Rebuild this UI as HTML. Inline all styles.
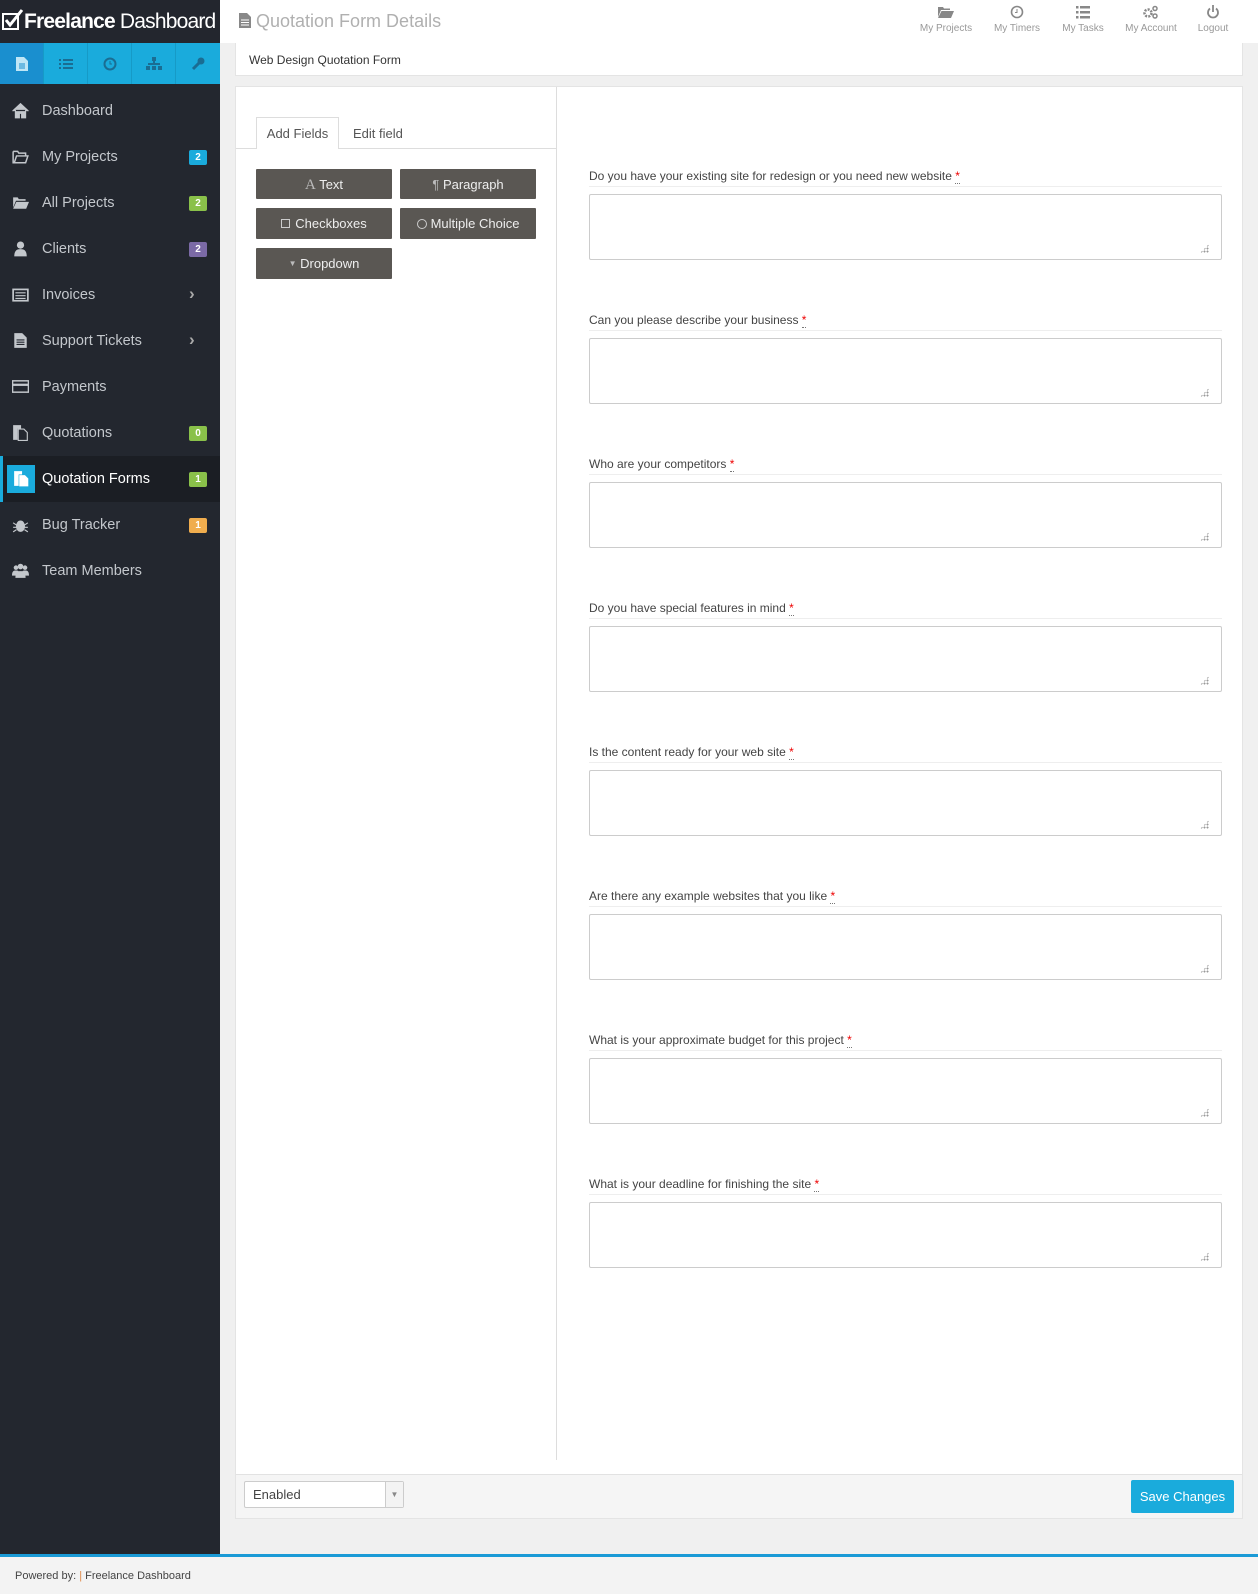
<!DOCTYPE html>
<html><head><meta charset="utf-8"><style>
*{margin:0;padding:0;box-sizing:border-box}
body{width:1258px;height:1594px;position:relative;background:#f0f0f0;font-family:"Liberation Sans",sans-serif;overflow:hidden;color:#555}
.abs{position:absolute}
#side{left:0;top:0;width:220px;height:1554px;background:#23272f}
#logo{left:0;top:0;width:220px;height:43px;background:#23262e;color:#fff;font-size:21px;line-height:43px;padding-left:2px;white-space:nowrap;overflow:hidden;letter-spacing:-0.8px}
#iconbar{left:0;top:43px;width:220px;height:41px;background:#1aabdc;display:flex}
#iconbar div{width:44px;height:41px;border-right:1px solid #169ac7;display:flex;align-items:center;justify-content:center}
.nav{left:0;width:220px;height:46px;color:#c3c7cc;font-size:14.5px;line-height:46px;padding-left:42px}
.nav .ic{position:absolute;left:12px;top:14px;width:17px;height:17px}
.badge{position:absolute;left:189px;top:16px;width:18px;height:15px;border-radius:2px;color:#fff;font-size:10px;font-weight:bold;line-height:15px;text-align:center}
.chev{position:absolute;left:189px;top:-1px;color:#aaa;font-size:17px;font-weight:bold}
#top{left:220px;top:0;width:1038px;height:43px;background:#fff}
.ti{top:5px;width:70px;text-align:center;color:#999;font-size:10px}
.ti svg{display:block;margin:0 auto 4px}
.panel{background:#fff;border:1px solid #e4e4e4}
.btn{position:absolute;width:136px;height:30px;background:#5a5753;color:#eee;font-size:13px;line-height:31px;text-align:center;border-radius:1px}
.lab{position:absolute;left:589px;width:633px;font-size:12px;color:#444;height:18px;border-bottom:1px solid #eee;line-height:14px}
.lab b{color:#e00;font-weight:normal;border-bottom:1px dotted #777}
.ta{position:absolute;left:589px;width:633px;height:66px;border:1px solid #ccc;border-radius:2px;background:#fff}
.ta:after{content:"";position:absolute;right:12px;bottom:6px;width:9px;height:9px;background:radial-gradient(circle,#999 0.9px,transparent 1.1px) 0 0/3px 3px;clip-path:polygon(100% 0,100% 100%,0 100%)}
</style></head><body>
<div id="side" class="abs"></div>
<div id="logo" class="abs"><svg width="22" height="22" style="vertical-align:-3px"><rect x="1" y="5" width="15" height="15" fill="none" stroke="#fff" stroke-width="2"/><path d="M4 11l4 5 12-15" fill="none" stroke="#fff" stroke-width="3"/></svg><b>Freelance</b> <span>Dashboard</span></div>
<div id="iconbar" class="abs">
<div style="background:#1a8fcf"><svg width="12" height="14"><path d="M0 0h8l4 4v10H0z" fill="#bfe6f6"/><path d="M3 7h6M3 9h6M3 11h6" stroke="#1a8fcf"/></svg></div>
<div><svg width="14" height="12" fill="#1a6d93"><rect x="0" y="1" width="2" height="2"/><rect x="4" y="1" width="10" height="2"/><rect x="0" y="5" width="2" height="2"/><rect x="4" y="5" width="10" height="2"/><rect x="0" y="9" width="2" height="2"/><rect x="4" y="9" width="10" height="2"/></svg></div>
<div><svg width="14" height="14"><circle cx="7" cy="7" r="5.5" fill="none" stroke="#1a6d93" stroke-width="2"/><path d="M7 4v3h2" stroke="#1a6d93" fill="none"/></svg></div>
<div><svg width="16" height="14" fill="#1a6d93"><rect x="6" y="0" width="4" height="4"/><rect x="7" y="4" width="2" height="3"/><rect x="2" y="6" width="12" height="2"/><rect x="0" y="9" width="4" height="4"/><rect x="6" y="9" width="4" height="4"/><rect x="12" y="9" width="4" height="4"/></svg></div>
<div style="border:none"><svg width="14" height="14"><path d="M2 12L8 6" stroke="#1a6d93" stroke-width="3"/><circle cx="10" cy="4" r="3.5" fill="#1a6d93"/></svg></div>
</div>

<div class="abs nav" style="top:88px"><svg class="ic" viewBox="0 0 15 15"><path d="M0.5 8L7.5 1.5 14.5 8M3 7v7h3.5v-4h2v4H12V7" fill="#c3c7cc" stroke="#c3c7cc"/></svg>Dashboard</div>
<div class="abs nav" style="top:134px"><svg class="ic" viewBox="0 0 15 15"><path d="M1 3h4l1 1.5h6V7M1 3v10h11l2-6H4l-2 6" fill="none" stroke="#c3c7cc" stroke-width="1.3"/></svg>My Projects<span class="badge" style="background:#1aabdc">2</span></div>
<div class="abs nav" style="top:180px"><svg class="ic" viewBox="0 0 15 15"><path d="M1 3h4l1 1.5h6V6H3.5L1 12z M3.8 7H15l-2.5 6H1z" fill="#c3c7cc"/></svg>All Projects<span class="badge" style="background:#8ac14a">2</span></div>
<div class="abs nav" style="top:226px"><svg class="ic" viewBox="0 0 15 15"><circle cx="7.5" cy="4.5" r="3.2" fill="#c3c7cc"/><path d="M2 14.5c0-5 2-6.5 5.5-6.5s5.5 1.5 5.5 6.5z" fill="#c3c7cc"/></svg>Clients<span class="badge" style="background:#7b6aa6">2</span></div>
<div class="abs nav" style="top:272px"><svg class="ic" viewBox="0 0 15 15"><rect x="1" y="3" width="13" height="10" fill="none" stroke="#c3c7cc" stroke-width="1.5"/><path d="M3 6h9M3 8.5h9M3 11h9" stroke="#c3c7cc"/></svg>Invoices<span class="chev">›</span></div>
<div class="abs nav" style="top:318px"><svg class="ic" viewBox="0 0 15 15"><path d="M2 1h7l4 4v9H2z" fill="#c3c7cc"/><path d="M4 7h7M4 9h7M4 11h7" stroke="#23272f"/></svg>Support Tickets<span class="chev">›</span></div>
<div class="abs nav" style="top:364px"><svg class="ic" viewBox="0 0 15 15"><rect x="0.5" y="2.5" width="14" height="10" fill="none" stroke="#c3c7cc" stroke-width="1.3"/><rect x="0.5" y="5" width="14" height="2" fill="#c3c7cc"/></svg>Payments</div>
<div class="abs nav" style="top:410px"><svg class="ic" viewBox="0 0 15 15"><path d="M1 1h7v3H5v10H1z" fill="#c3c7cc"/><path d="M5.5 4.5h5l3 3v7h-8z" fill="none" stroke="#c3c7cc"/></svg>Quotations<span class="badge" style="background:#8ac14a">0</span></div>
<div class="abs nav" style="top:456px;background:#1b1e24;color:#fff;border-left:3px solid #1aabdc"><div style="position:absolute;left:4px;top:9px;width:28px;height:28px;background:#1aabdc"></div><svg class="ic" viewBox="0 0 15 15" style="left:10px"><path d="M1 1h7v3H5v10H1z" fill="#fff"/><path d="M5.5 4.5h5l3 3v7h-8z" fill="#fff"/></svg><span style="margin-left:-3px">Quotation Forms</span><span class="badge" style="background:#8ac14a;left:186px">1</span></div>
<div class="abs nav" style="top:502px"><svg class="ic" viewBox="0 0 15 15"><ellipse cx="7.5" cy="9" rx="4" ry="5" fill="#c3c7cc"/><path d="M1 6l3 2M14 6l-3 2M1 10h3M14 10h-3M1 14l3-2M14 14l-3-2" stroke="#c3c7cc"/></svg>Bug Tracker<span class="badge" style="background:#f0ad4e">1</span></div>
<div class="abs nav" style="top:548px"><svg class="ic" viewBox="0 0 15 15"><circle cx="3.5" cy="5" r="2" fill="#c3c7cc"/><circle cx="11.5" cy="5" r="2" fill="#c3c7cc"/><circle cx="7.5" cy="4" r="2.5" fill="#c3c7cc"/><path d="M0 12c0-4 1.5-4.5 3.5-4.5S7 8 7 12zM8 12c0-4 1.5-4.5 3.5-4.5S15 8 15 12zM3 14c0-5 2-6 4.5-6S12 9 12 14z" fill="#c3c7cc"/></svg>Team Members</div>

<div id="top" class="abs"></div>
<div class="abs" style="left:239px;top:11px;font-size:18px;color:#b0b0b0;white-space:nowrap"><svg width="12" height="15" style="vertical-align:-1px"><path d="M0 0h8l4 4v11H0z" fill="#888"/><path d="M2 7h8M2 9.5h8M2 12h8" stroke="#fff"/></svg> Quotation Form Details</div>
<div class="abs ti" style="left:911px"><svg width="16" height="14"><path d="M0 2h5l1 1.5h6V5H3L0 12zM3.5 6H16l-3 7H0z" fill="#888"/></svg>My Projects</div>
<div class="abs ti" style="left:982px"><svg width="14" height="14"><circle cx="7" cy="7" r="5.5" fill="none" stroke="#888" stroke-width="1.6"/><path d="M7 4v3.5H5" stroke="#888" fill="none"/></svg>My Timers</div>
<div class="abs ti" style="left:1048px"><svg width="14" height="14" fill="#888"><rect x="0" y="1" width="2.5" height="2.5"/><rect x="4" y="1" width="10" height="2.5"/><rect x="0" y="6" width="2.5" height="2.5"/><rect x="4" y="6" width="10" height="2.5"/><rect x="0" y="11" width="2.5" height="2.5"/><rect x="4" y="11" width="10" height="2.5"/></svg>My Tasks</div>
<div class="abs ti" style="left:1116px"><svg width="16" height="14"><circle cx="5" cy="8" r="3.5" fill="none" stroke="#888" stroke-width="2.5" stroke-dasharray="2 1.2"/><circle cx="12" cy="3.5" r="2" fill="none" stroke="#888" stroke-width="1.5"/><circle cx="12" cy="11" r="2" fill="none" stroke="#888" stroke-width="1.5"/></svg>My Account</div>
<div class="abs ti" style="left:1178px"><svg width="14" height="14"><path d="M4 3.5A5 5 0 1 0 10 3.5" fill="none" stroke="#888" stroke-width="1.8"/><path d="M7 0v7" stroke="#888" stroke-width="1.8"/></svg>Logout</div>

<div class="abs panel" style="left:235px;top:43px;width:1008px;height:33px;border-top:none"></div>
<div class="abs" style="left:249px;top:53px;font-size:12px;color:#333">Web Design Quotation Form</div>

<div class="abs panel" style="left:235px;top:86px;width:1008px;height:1433px"></div>
<div class="abs" style="left:556px;top:87px;width:1px;height:1373px;background:#ddd"></div>
<div class="abs" style="left:236px;top:148px;width:320px;height:1px;background:#ddd"></div>
<div class="abs" style="left:256px;top:117px;width:83px;height:32px;background:#fff;border:1px solid #ddd;border-bottom:none;font-size:13px;line-height:32px;text-align:center;color:#555">Add Fields</div>
<div class="abs" style="left:353px;top:126px;font-size:13px;color:#555">Edit field</div>
<div class="btn" style="left:256px;top:169px"><span style="font-family:'Liberation Serif',serif;font-size:15px;color:#bbb">A</span> Text</div>
<div class="btn" style="left:400px;top:169px"><span style="color:#bbb">¶</span> Paragraph</div>
<div class="btn" style="left:256px;top:208px;height:31px;line-height:32px"><span style="display:inline-block;width:9px;height:9px;border:1px solid #ccc;margin-right:5px"></span>Checkboxes</div>
<div class="btn" style="left:400px;top:208px;height:31px;line-height:32px"><span style="display:inline-block;width:10px;height:10px;border:1px solid #ccc;border-radius:50%;margin-right:4px;vertical-align:-1px"></span>Multiple Choice</div>
<div class="btn" style="left:256px;top:248px;height:31px;line-height:32px"><span style="font-size:8px;color:#bbb;vertical-align:2px">▼</span> Dropdown</div>

<div class="lab" style="top:169px">Do you have your existing site for redesign or you need new website <b>*</b></div><div class="ta" style="top:194px"></div>
<div class="lab" style="top:313px">Can you please describe your business <b>*</b></div><div class="ta" style="top:338px"></div>
<div class="lab" style="top:457px">Who are your competitors <b>*</b></div><div class="ta" style="top:482px"></div>
<div class="lab" style="top:601px">Do you have special features in mind <b>*</b></div><div class="ta" style="top:626px"></div>
<div class="lab" style="top:745px">Is the content ready for your web site <b>*</b></div><div class="ta" style="top:770px"></div>
<div class="lab" style="top:889px">Are there any example websites that you like <b>*</b></div><div class="ta" style="top:914px"></div>
<div class="lab" style="top:1033px">What is your approximate budget for this project <b>*</b></div><div class="ta" style="top:1058px"></div>
<div class="lab" style="top:1177px">What is your deadline for finishing the site <b>*</b></div><div class="ta" style="top:1202px"></div>

<div class="abs" style="left:236px;top:1474px;width:1006px;height:44px;background:#f5f5f5;border-top:1px solid #e2e2e2"></div>
<div class="abs" style="left:244px;top:1481px;width:160px;height:27px;background:#fff;border:1px solid #ccc;border-radius:2px;font-size:13px;color:#444;line-height:25px;padding-left:8px">Enabled<div style="position:absolute;right:0;top:0;width:18px;height:25px;border-left:1px solid #ccc;background:#f3f3f3;font-size:8px;color:#888;text-align:center">▼</div></div>
<div class="abs" style="left:1131px;top:1480px;width:103px;height:33px;background:#1aabdc;color:#fff;font-size:13px;line-height:33px;text-align:center;border-radius:2px">Save Changes</div>

<div class="abs" style="left:0;top:1554px;width:1258px;height:3px;background:#1a9ad6"></div>
<div class="abs" style="left:0;top:1557px;width:1258px;height:37px;background:#f3f3f3"></div>
<div class="abs" style="left:15px;top:1570px;font-size:11px;color:#444">Powered by: <span style="color:#e08a4a">|</span> Freelance Dashboard</div>
</body></html>
